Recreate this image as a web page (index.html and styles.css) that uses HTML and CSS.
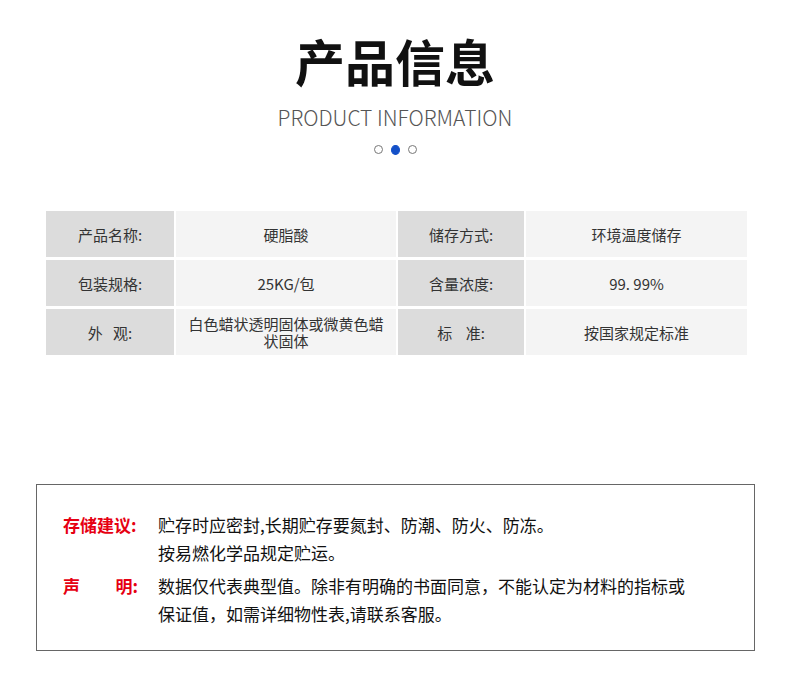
FILE: index.html
```html
<!DOCTYPE html>
<html lang="zh-CN">
<head>
<meta charset="UTF-8">
<meta name="viewport" content="width=device-width, initial-scale=1.0">
<title>产品信息</title>
<link rel="stylesheet" href="styles.css">
</head>
<body>
    <header class="heading">
        <h1>产品信息</h1>
        <p class="sub">PRODUCT INFORMATION</p>
        <div class="dots">
            <span class="dot"></span>
            <span class="dot active"></span>
            <span class="dot"></span>
        </div>
    </header>

    <!-- 产品参数表 -->
    <section class="info-table">
        <div class="cell label">产品名称:</div>
        <div class="cell value">硬脂酸</div>
        <div class="cell label">储存方式:</div>
        <div class="cell value">环境温度储存</div>

        <div class="cell label">包装规格:</div>
        <div class="cell value">25KG/包</div>
        <div class="cell label">含量浓度:</div>
        <div class="cell value">99. 99%</div>

        <div class="cell label">外&nbsp;&nbsp;&nbsp;观:</div>
        <div class="cell value">白色蜡状透明固体或微黄色蜡状固体</div>
        <div class="cell label">标&nbsp;&nbsp;&nbsp;&nbsp;准:</div>
        <div class="cell value">按国家规定标准</div>
    </section>

    <!-- 储存说明 -->
    <section class="notice">
        <div class="notice-row">
            <div class="notice-label">存储建议:</div>
            <div class="notice-text">贮存时应密封,长期贮存要氮封、防潮、防火、防冻。<br>按易燃化学品规定贮运。</div>
        </div>
        <div class="notice-row">
            <div class="notice-label split"><span>声</span><span>明:</span></div>
            <div class="notice-text">数据仅代表典型值。除非有明确的书面同意，不能认定为材料的指标或<br>保证值，如需详细物性表,请联系客服。</div>
        </div>
    </section>
</body>
</html>
```

FILE: styles.css
```css
body, html {
    margin: 0;
    padding: 0;
    background-color: #fff;
}
body {
    font-family: "Noto Sans CJK SC", "Noto Sans", sans-serif;
    color: #222;
    padding-bottom: 40px;
}
.heading {
    text-align: center;
    padding-top: 25px;
}
.heading h1 {
    margin: 0;
    font-size: 50px;
    line-height: 70px;
    font-weight: 700;
    color: #111;
}
.sub {
    margin: 9px 0 0;
    font-size: 21px;
    line-height: 26px;
    font-weight: 300;
    color: #555;
}
.dots {
    display: flex;
    justify-content: center;
    gap: 8px;
    margin-top: 15px;
}
.dot {
    width: 7px;
    height: 7px;
    border: 1.5px solid #777;
    border-radius: 50%;
}
.dot.active {
    background-color: #1450c8;
    border-color: #1450c8;
    height: 8px;
}
.info-table {
    display: grid;
    grid-template-columns: 128px 220px 126px 221px;
    grid-auto-rows: 46px;
    gap: 3px 2px;
    width: 701px;
    margin: 56px 0 0 46px;
}
.cell {
    display: flex;
    align-items: center;
    justify-content: center;
    text-align: center;
    padding: 0 8px;
    font-size: 15px;
    line-height: 17px;
    color: #333;
}
.label {
    background-color: #dcdcdc;
}
.value {
    background-color: #f4f4f4;
}
.notice {
    width: 665px;
    margin: 129px 0 0 36px;
    padding: 26px 26px 22px;
    border: 1px solid #666;
}
.notice-row {
    display: flex;
}
.notice-row + .notice-row {
    margin-top: 5px;
}
.notice-label {
    flex: 0 0 75px;
    margin-right: 20px;
    white-space: nowrap;
    color: #e60012;
    font-weight: 700;
    font-size: 17px;
    line-height: 28px;
}
.notice-label.split {
    display: flex;
    justify-content: space-between;
}
.notice-text {
    font-size: 17px;
    line-height: 28px;
    color: #111;
}
```
